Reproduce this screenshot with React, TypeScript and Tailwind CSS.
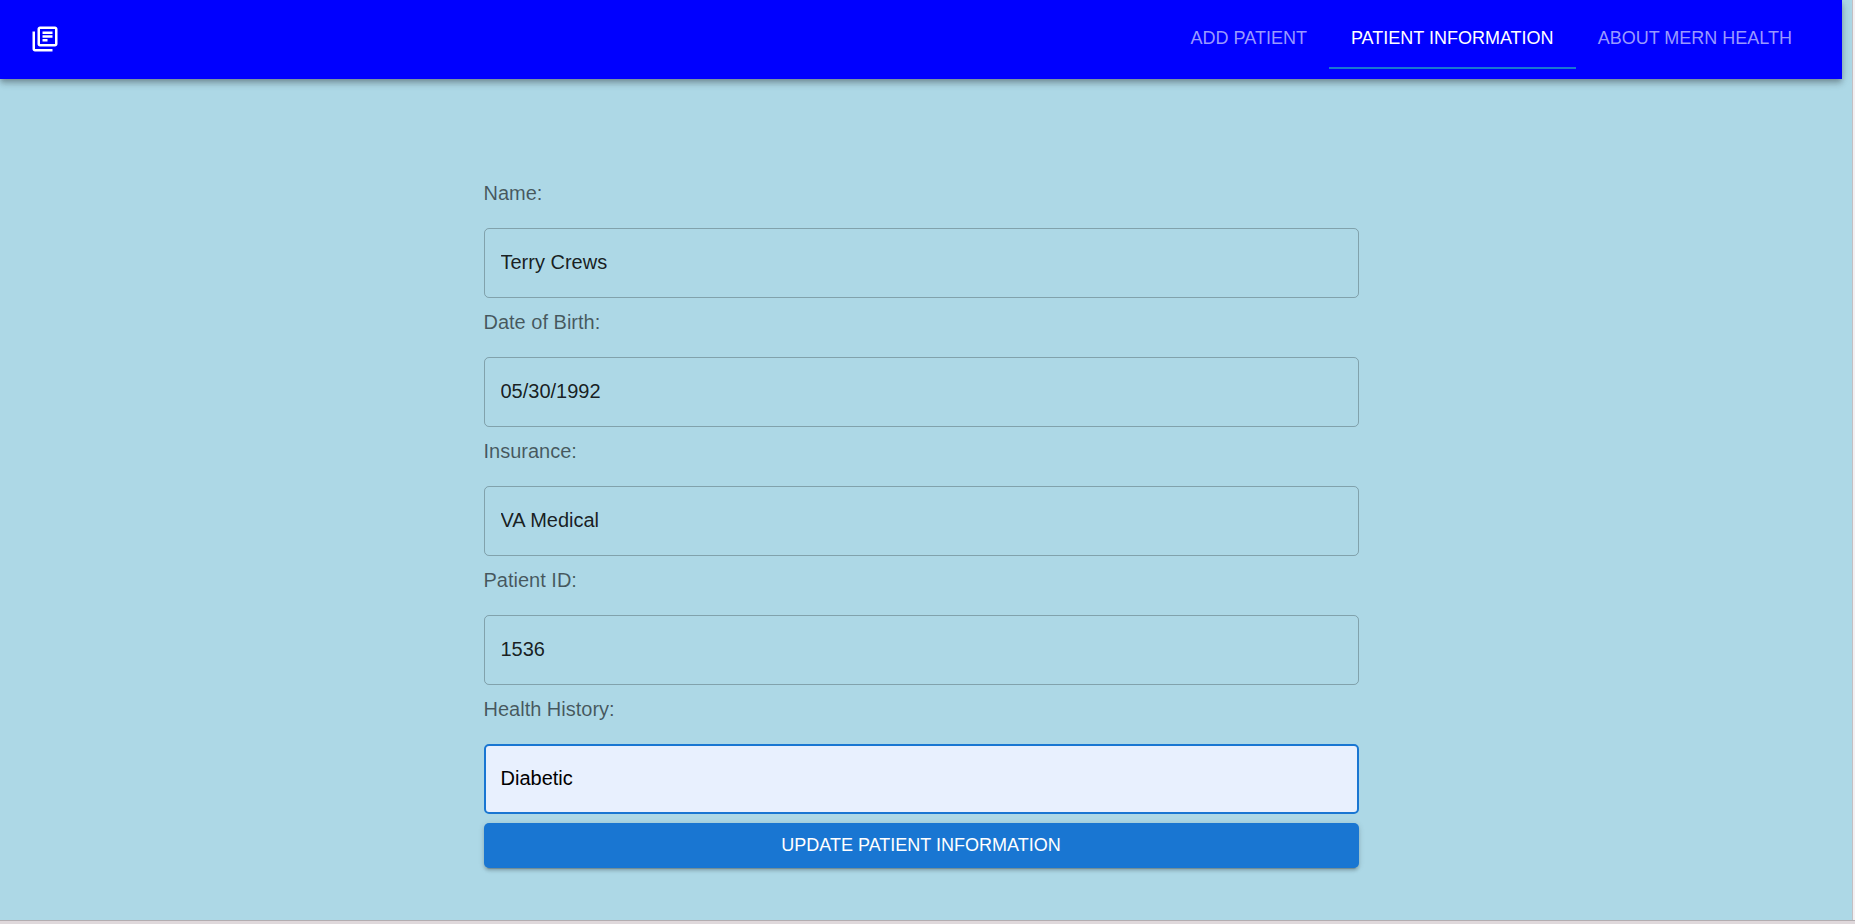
import { useState } from "react";

type Field = { id: string; label: string; value: string };

const initialFields: Field[] = [
  { id: "name", label: "Name:", value: "Terry Crews" },
  { id: "dob", label: "Date of Birth:", value: "05/30/1992" },
  { id: "insurance", label: "Insurance:", value: "VA Medical" },
  { id: "patient-id", label: "Patient ID:", value: "1536" },
  { id: "history", label: "Health History:", value: "Diabetic" },
];

const tabs = ["ADD PATIENT", "PATIENT INFORMATION", "ABOUT MERN HEALTH"];

function LibraryIcon() {
  return (
    <svg viewBox="0 0 24 24" fill="currentColor" className="size-[30px]" aria-hidden="true">
      <path d="M4 6H2v14c0 1.1.9 2 2 2h14v-2H4V6zm16-4H8c-1.1 0-2 .9-2 2v12c0 1.1.9 2 2 2h12c1.1 0 2-.9 2-2V4c0-1.1-.9-2-2-2zm0 14H8V4h12v12zM10 9h8v2h-8zm0 3h4v2h-4zm0-6h8v2h-8z" />
    </svg>
  );
}

function Header() {
  return (
    <header className="flex items-center justify-between bg-[#0000ff] pt-[9px] pr-7 pb-2.5 pl-[30px] text-white shadow-[0_3px_5px_-1px_rgba(0,0,0,0.2),0_5px_6px_0_rgba(0,0,0,0.14),0_1px_12px_0_rgba(0,0,0,0.12)]">
      <LibraryIcon />
      <nav className="flex">
        {tabs.map((tab) => {
          const active = tab === "PATIENT INFORMATION";
          return (
            <a
              key={tab}
              href="#"
              aria-current={active ? "page" : undefined}
              className={
                active
                  ? "border-b-2 border-[#1976d2] px-[22px] py-[17px] text-lg leading-6"
                  : "border-b-2 border-transparent px-[22px] py-[17px] text-lg leading-6 text-[#9999ff]"
              }
            >
              {tab}
            </a>
          );
        })}
      </nav>
    </header>
  );
}

export default function App() {
  const [fields, setFields] = useState(initialFields);

  const update = (id: string, value: string) =>
    setFields(fields.map((f) => (f.id === id ? { ...f, value } : f)));

  return (
    <div className="flex min-h-screen flex-col bg-[#add8e6] font-['Liberation_Sans',Arial,sans-serif]">
      <div className="flex grow border-b border-[#b3adb0]">
        <div className="grow border-r border-[#c4bfc2] pr-2.5">
          <Header />
          <form
            className="mx-auto flex max-w-[875px] flex-col pt-[90px] pb-[50px]"
            onSubmit={(e) => e.preventDefault()}
          >
            {fields.map((f) => (
              <div key={f.id} className="flex flex-col pt-3">
                <label htmlFor={f.id} className="mb-[23px] text-xl leading-6 text-black/60">
                  {f.label}
                </label>
                <input
                  id={f.id}
                  value={f.value}
                  onChange={(e) => update(f.id, e.target.value)}
                  className={
                    f.id === "history"
                      ? "h-[70px] rounded-[5px] border-2 border-[#1976d2] bg-[#e8f0fe] px-[15px] pb-0.5 text-xl text-black outline-none"
                      : "h-[70px] rounded-[5px] border border-black/25 bg-transparent px-4 pb-0.5 text-xl text-black/87 outline-none"
                  }
                />
              </div>
            ))}
            <button
              type="submit"
              className="mt-[9px] h-[45px] rounded-[5px] bg-[#1976d2] pb-0.5 text-lg text-white shadow-[0_4px_1px_-3px_rgba(0,0,0,0.2),0_3px_3px_0_rgba(0,0,0,0.14),0_1px_6px_0_rgba(0,0,0,0.12)]"
            >
              UPDATE PATIENT INFORMATION
            </button>
          </form>
        </div>
        <div className="w-0.5 bg-[#f3f1f4]" />
      </div>
      <div className="h-[3px] bg-[#dfd8db]" />
    </div>
  );
}
